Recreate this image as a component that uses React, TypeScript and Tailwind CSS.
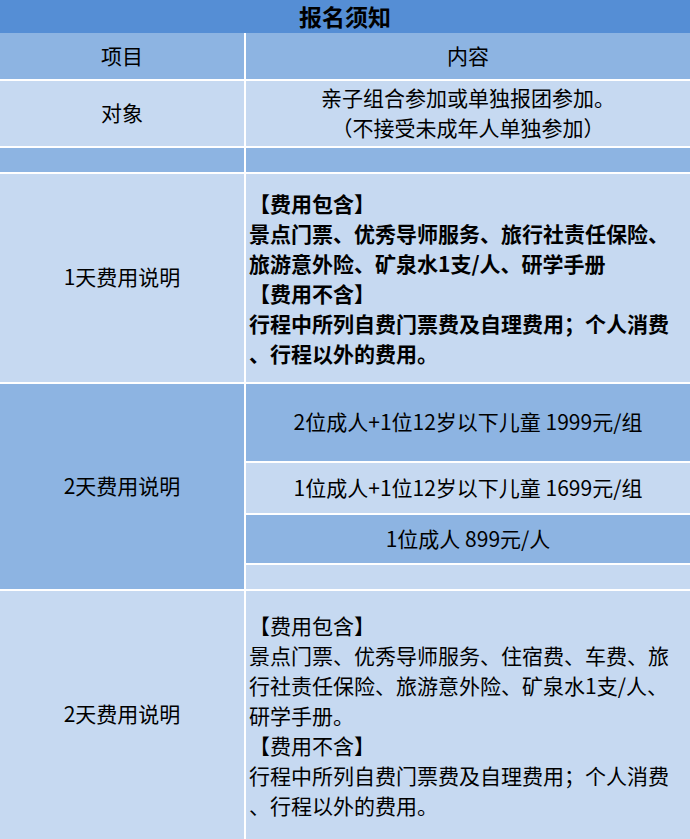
import React from "react";

const FONT = { fontFamily: '"Noto Sans CJK SC", "Noto Sans", sans-serif' };

export default function App() {
  return (
    <div className="w-[690px] h-[839px] bg-white text-black overflow-hidden" style={FONT}>
      <div className="h-[33px] bg-[#558ed5] text-center text-[23px] font-bold leading-[32px]">
        报名须知
      </div>
      <div className="grid grid-cols-[244px_1fr] gap-x-[2px] gap-y-[2px] text-[21px] leading-[30px]">
        {/* header */}
        <div className="h-[46px] bg-[#8db4e2] flex items-center justify-center pb-[3px]">项目</div>
        <div className="h-[46px] bg-[#8db4e2] flex items-center justify-center pb-[3px]">内容</div>
        {/* 对象 */}
        <div className="h-[65px] bg-[#c6d9f1] flex items-center justify-center pb-[4px]">对象</div>
        <div className="h-[65px] bg-[#c6d9f1] flex flex-col items-center justify-center pb-[4px]">
          <div>亲子组合参加或单独报团参加。</div>
          <div>（不接受未成年人单独参加）</div>
        </div>
        {/* empty */}
        <div className="h-[24px] bg-[#8db4e2]"></div>
        <div className="h-[24px] bg-[#8db4e2]"></div>
        {/* 1天 */}
        <div className="h-[208px] bg-[#c6d9f1] flex items-center justify-center pb-[4px]">1天费用说明</div>
        <div className="h-[208px] bg-[#c6d9f1] flex flex-col justify-center pl-[3px] pb-[1px] font-bold whitespace-nowrap">
          <div>【费用包含】</div>
          <div>景点门票、优秀导师服务、旅行社责任保险、</div>
          <div>旅游意外险、矿泉水1支/人、研学手册</div>
          <div>【费用不含】</div>
          <div>行程中所列自费门票费及自理费用；个人消费</div>
          <div>、行程以外的费用。</div>
        </div>
        {/* 2天 prices */}
        <div className="h-[205px] bg-[#8db4e2] flex items-center justify-center pb-[4px]">2天费用说明</div>
        <div className="h-[205px] flex flex-col gap-[2px]">
          <div className="h-[77px] bg-[#8db4e2] flex items-center justify-center pb-[4px]">2位成人+1位12岁以下儿童 1999元/组</div>
          <div className="h-[50px] bg-[#c6d9f1] flex items-center justify-center pb-[3px]">1位成人+1位12岁以下儿童 1699元/组</div>
          <div className="h-[48px] bg-[#8db4e2] flex items-center justify-center pb-[3px]">1位成人 899元/人</div>
          <div className="h-[24px] bg-[#c6d9f1]"></div>
        </div>
        {/* 2天 details */}
        <div className="h-[248px] bg-[#c6d9f1] flex items-center justify-center pb-[4px]">2天费用说明</div>
        <div className="h-[248px] bg-[#c6d9f1] flex flex-col justify-center pl-[3px] whitespace-nowrap">
          <div>【费用包含】</div>
          <div>景点门票、优秀导师服务、住宿费、车费、旅</div>
          <div>行社责任保险、旅游意外险、矿泉水1支/人、</div>
          <div>研学手册。</div>
          <div>【费用不含】</div>
          <div>行程中所列自费门票费及自理费用；个人消费</div>
          <div>、行程以外的费用。</div>
        </div>
      </div>
    </div>
  );
}
